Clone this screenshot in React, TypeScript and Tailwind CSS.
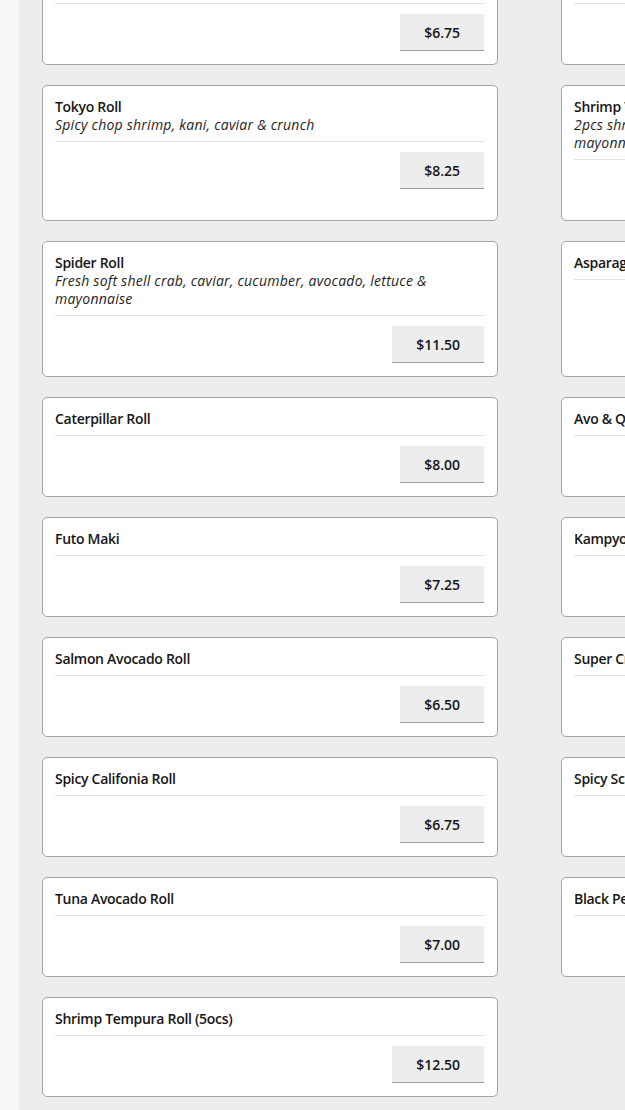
import React from 'react';

interface MenuItem {
  name: string;
  desc?: string;
  price: string;
}

// left and right column, row by row
const rows: [MenuItem, MenuItem | null][] = [
  [{ name: 'California Roll', price: '$6.75' }, { name: 'Shrimp Avocado Roll', price: '$7.50' }],
  [
    { name: 'Tokyo Roll', desc: 'Spicy chop shrimp, kani, caviar & crunch', price: '$8.25' },
    { name: 'Shrimp Tempura Roll', desc: '2pcs shrimp tempura, avocado, cucumber, caviar, lettuce & mayonnaise', price: '$10.50' },
  ],
  [
    { name: 'Spider Roll', desc: 'Fresh soft shell crab, caviar, cucumber, avocado, lettuce & mayonnaise', price: '$11.50' },
    { name: 'Asparagus Roll', price: '$5.50' },
  ],
  [{ name: 'Caterpillar Roll', price: '$8.00' }, { name: 'Avo & Quinoa Roll', price: '$6.00' }],
  [{ name: 'Futo Maki', price: '$7.25' }, { name: 'Kampyo Roll', price: '$5.00' }],
  [{ name: 'Salmon Avocado Roll', price: '$6.50' }, { name: 'Super Crunch Roll', price: '$9.00' }],
  [{ name: 'Spicy Califonia Roll', price: '$6.75' }, { name: 'Spicy Scallop Roll', price: '$8.50' }],
  [{ name: 'Tuna Avocado Roll', price: '$7.00' }, { name: 'Black Pepper Tuna Roll', price: '$9.50' }],
  [{ name: 'Shrimp Tempura Roll (5ocs)', price: '$12.50' }, null],
];

const MenuCard: React.FC<{ item: MenuItem }> = ({ item }) => (
  <div className="flex flex-col rounded-[5px] border border-[#a6a6a6] bg-white pl-3 pr-[13px] pt-3 pb-[13px]">
    <div className="text-[14px] leading-[18px] font-semibold tracking-[-0.3px] text-[#161616]">{item.name}</div>
    {item.desc && (
      <div className="text-[14px] leading-[18px] italic tracking-[0.24px] text-[#1e1e1e]">{item.desc}</div>
    )}
    <div className="mt-[7px] border-t border-[#e2e2e2]" />
    <div className="mt-[10px] flex justify-end">
      <button className="h-[37px] border-b border-[#9c9c9c] bg-[#ededed] px-[24px] text-[14px] font-semibold text-[#161616]">
        {item.price}
      </button>
    </div>
  </div>
);

export default function App() {
  return (
    <div
      className="flex h-[1110px] w-[625px] overflow-hidden"
      style={{ fontFamily: '"Open Sans", "Noto Sans", sans-serif' }}
    >
      <div className="w-[19px] shrink-0 bg-[#f8f8f8]" />
      <div className="flex-1 bg-[#ededed] pl-[23px]">
        <div className="mt-[-35px] grid grid-cols-[456px_456px] gap-x-[63px] gap-y-5">
          {rows.map(([left, right], i) => (
            <React.Fragment key={i}>
              <MenuCard item={left} />
              {right ? <MenuCard item={right} /> : <div />}
            </React.Fragment>
          ))}
        </div>
      </div>
    </div>
  );
}
